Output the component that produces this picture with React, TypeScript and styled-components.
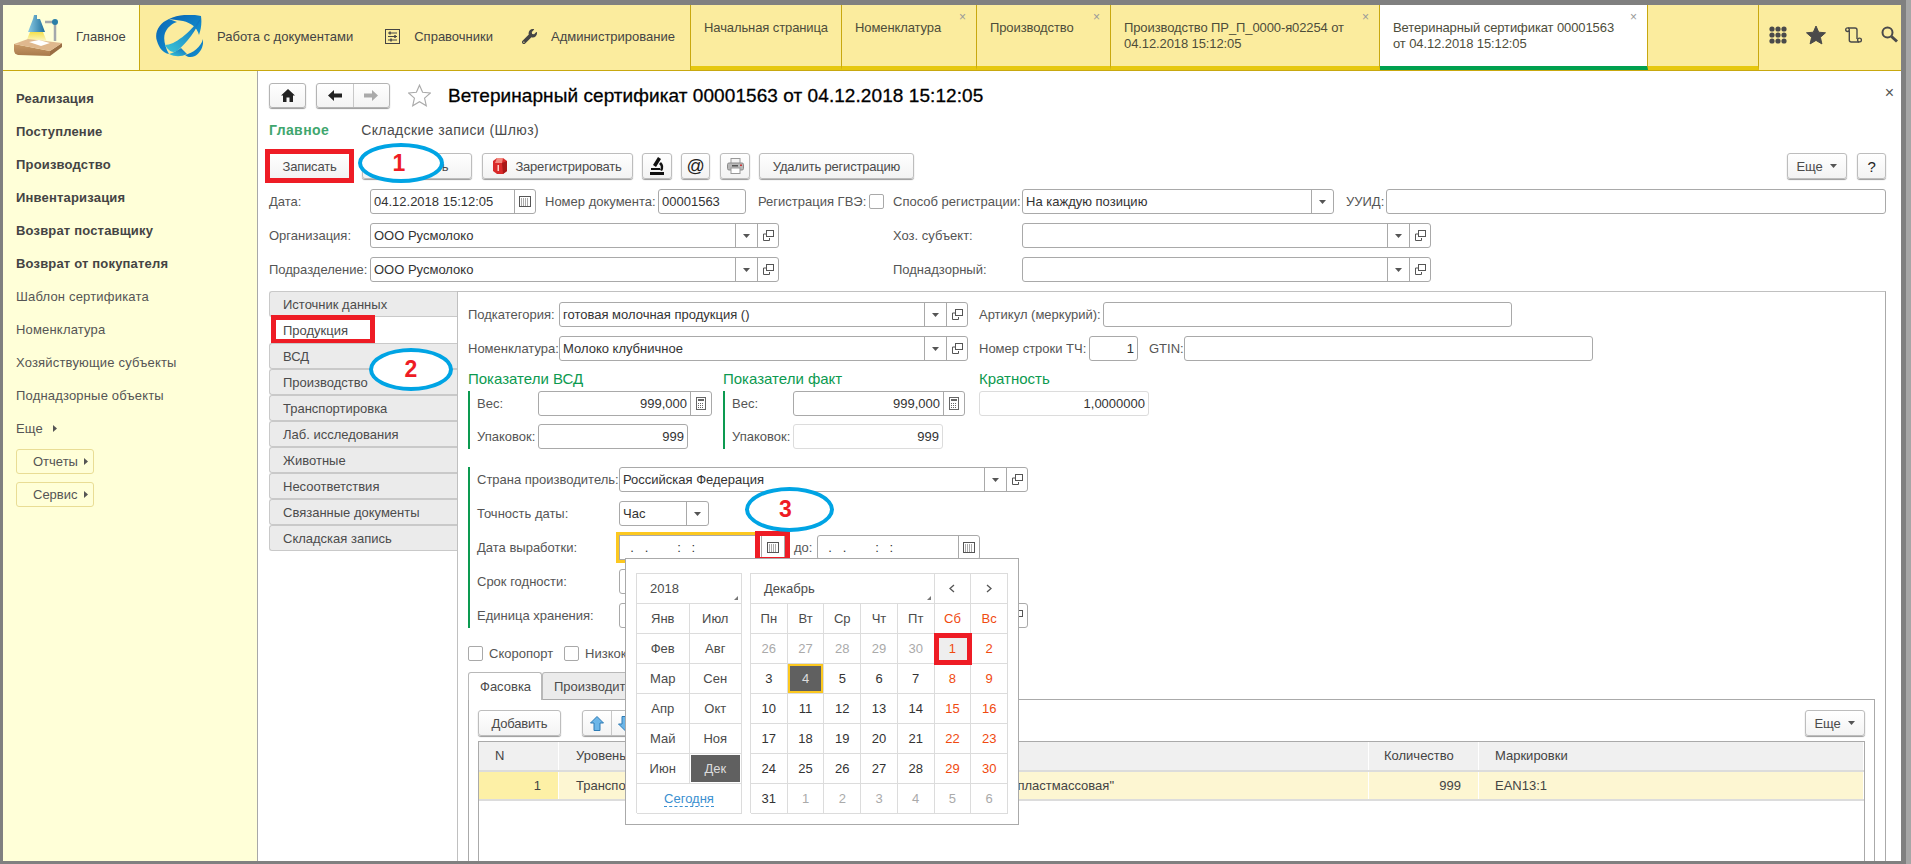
import React from "react";
import styled, { createGlobalStyle } from "styled-components";
import { FaWrench } from "react-icons/fa";

const GlobalStyle = createGlobalStyle`
  * { box-sizing: border-box; }
  html, body { margin: 0; padding: 0; background: #808080; overflow: hidden; }
  body { font-family: "Liberation Sans", Arial, sans-serif; font-size: 13px; color: #4b4b4b; }
`;

const Page = styled.div`
  position: relative;
  width: 1911px;
  height: 864px;
  padding: 5px 10px 3px 3px;
  background: linear-gradient(90deg, #808080 calc(100% - 5px), #a6a6a6 calc(100% - 5px));
  overflow: hidden;
`;

const Window = styled.div`
  display: flex;
  flex-direction: column;
  height: 100%;
  background: #fff;
`;

const Header = styled.header`
  display: flex;
  height: 66px;
  flex-shrink: 0;
  background: #fbec9e;
  border-bottom: 1px solid #c8a80f;
`;

const HomeSection = styled.div`
  display: flex;
  align-items: center;
  width: 137px;
  padding: 0 0 3px 10px;
  gap: 13px;
  background: #ffffd8;
  border-right: 1px solid #c8a80f;
  color: #444;
`;

const Nav = styled.nav`
  display: flex;
  align-items: center;
  width: 551px;
  padding: 0 0 3px 15px;
  border-right: 1px solid #c8a80f;
  color: #444;
`;

const NavItem = styled.div<{ $ml: number }>`
  display: flex;
  align-items: center;
  gap: 14px;
  margin-left: ${(p) => p.$ml}px;
  white-space: nowrap;
`;

const Tab = styled.div<{ $w: number; $active?: boolean }>`
  position: relative;
  width: ${(p) => p.$w}px;
  padding: 15px 0 0 13px;
  line-height: 16px;
  letter-spacing: -0.1px;
  white-space: nowrap;
  color: #4d4d3a;
  border-right: 1px solid #c8a80f;
  border-bottom: 4px solid ${(p) => (p.$active ? "#00a04f" : "#e6c80e")};
  background: ${(p) => (p.$active ? "#fff" : "transparent")};
`;

const TabClose = styled.span`
  position: absolute;
  right: 10px;
  top: 4px;
  font-size: 12px;
  color: #999;
`;

const TabFiller = styled.div`
  flex: 1;
  border-right: 1px solid #c8a80f;
  border-bottom: 4px solid #e6c80e;
`;

const QuickIcons = styled.div`
  display: flex;
  align-items: center;
  width: 142px;
  padding: 0 0 6px 10px;
  gap: 19px;
`;

const Body = styled.div`
  display: flex;
  flex: 1;
  min-height: 0;
`;

const Sidebar = styled.aside`
  width: 255px;
  flex-shrink: 0;
  padding: 11px 0 0 13px;
  background: #ffffd8;
  border-right: 1px solid #a8a8a8;
  letter-spacing: 0.18px;
`;

const SideLink = styled.div<{ $bold?: boolean }>`
  display: flex;
  align-items: center;
  gap: 10px;
  height: 33px;
  font-weight: ${(p) => (p.$bold ? 700 : 400)};
  color: ${(p) => (p.$bold ? "#444" : "#555")};
`;

const SideButton = styled.div<{ $mt: number }>`
  display: flex;
  align-items: center;
  gap: 6px;
  width: 78px;
  height: 25px;
  margin-top: ${(p) => p.$mt}px;
  padding-left: 16px;
  border: 1px solid #e9dd95;
  border-radius: 3px;
  color: #555;
  letter-spacing: 0;
`;

const Main = styled.main`
  display: flex;
  flex-direction: column;
  flex: 1;
  min-width: 0;
  padding: 12px 15px 0 11px;
`;

const TitleRow = styled.div`
  display: flex;
  align-items: center;
  height: 25px;
`;

const StarSlot = styled.span`
  display: flex;
  margin-left: 18px;
`;

const Title = styled.h1`
  margin: 0 0 0 17px;
  font-size: 19px;
  font-weight: 400;
  color: #000;
  letter-spacing: 0.07px;
  -webkit-text-stroke: 0.3px #000;
  white-space: nowrap;
`;

const CloseMark = styled.span`
  margin: -6px -8px 0 auto;
  font-size: 16px;
  color: #555;
`;

const SquareButton = styled.div<{ $w: number; $ml?: number }>`
  display: flex;
  align-items: center;
  justify-content: center;
  width: ${(p) => p.$w}px;
  height: 25px;
  margin-left: ${(p) => p.$ml ?? 0}px;
  border: 1px solid #b4b4b4;
  border-radius: 3px;
  background: linear-gradient(#fff, #f3f3f3);
  box-shadow: 0 1px 1px #999;
`;

const ArrowPart = styled.div<{ $divide?: boolean }>`
  display: flex;
  align-items: center;
  justify-content: center;
  flex: 1;
  height: 100%;
  border-left: ${(p) => (p.$divide ? "1px solid #c8c8c8" : "none")};
`;

const SectionTabs = styled.div`
  display: flex;
  align-items: center;
  gap: 32px;
  height: 20px;
  margin-top: 12px;
`;

const SectionTab = styled.span<{ $active?: boolean }>`
  font-size: 14px;
  letter-spacing: 0.4px;
  font-weight: ${(p) => (p.$active ? 700 : 400)};
  color: ${(p) => (p.$active ? "#3fa66e" : "#4b4b4b")};
`;

const Toolbar = styled.div`
  display: flex;
  align-items: center;
  height: 26px;
  margin-top: 13px;
`;

const Button = styled.div<{ $w: number; $ml?: number; $auto?: boolean; $marked?: boolean; $big?: number }>`
  display: flex;
  align-items: center;
  justify-content: center;
  gap: 8px;
  flex-shrink: 0;
  width: ${(p) => p.$w}px;
  height: 26px;
  margin-left: ${(p) => (p.$auto ? "auto" : `${p.$ml ?? 0}px`)};
  border: 1px solid #bdbdbd;
  border-radius: ${(p) => (p.$marked ? 0 : 3)}px;
  background: linear-gradient(#fff, #f3f3f3);
  box-shadow: 0 1px 1px #999;
  color: ${(p) => (p.$big ? "#222" : "#4b4b4b")};
  font-size: ${(p) => p.$big ?? 13}px;
  letter-spacing: -0.2px;
  white-space: nowrap;
  outline: ${(p) => (p.$marked ? "5px solid #ee1c25" : "none")};
  outline-offset: -1px;
`;

const FormRows = styled.div<{ $mt?: number }>`
  display: flex;
  flex-direction: column;
  gap: 9px;
  margin-top: ${(p) => p.$mt ?? 0}px;
`;

const Row = styled.div`
  display: flex;
  align-items: center;
`;

const Label = styled.label<{ $w: number; $ml?: number }>`
  flex-shrink: 0;
  width: ${(p) => p.$w}px;
  margin-left: ${(p) => p.$ml ?? 0}px;
  color: #555;
  white-space: nowrap;
`;

const Field = styled.div<{ $w?: number; $light?: boolean; $focus?: boolean; $grow?: boolean }>`
  position: relative;
  display: flex;
  flex-shrink: 0;
  flex-grow: ${(p) => (p.$grow ? 1 : 0)};
  width: ${(p) => (p.$w ? `${p.$w}px` : "auto")};
  height: 25px;
  border: 1px solid ${(p) => (p.$light ? "#dcdcdc" : "#a9a9a9")};
  border-radius: ${(p) => (p.$focus ? 0 : 3)}px;
  background: #fff;
  outline: ${(p) => (p.$focus ? "3px solid #fcc820" : "none")};
`;

const FieldText = styled.span<{ $right?: boolean }>`
  flex: 1;
  min-width: 0;
  padding: 0 3px;
  line-height: 23px;
  color: #333;
  text-align: ${(p) => (p.$right ? "right" : "left")};
  white-space: pre;
  overflow: hidden;
`;

const Addon = styled.div<{ $w: number }>`
  display: flex;
  align-items: center;
  justify-content: center;
  flex-shrink: 0;
  width: ${(p) => p.$w}px;
  border-left: 1px solid #a9a9a9;
`;

const RedFrame = styled.span`
  position: absolute;
  right: -6px;
  top: -5px;
  width: 35px;
  height: 31px;
  border: 5px solid #ee1c25;
`;

const CheckBox = styled.span`
  flex-shrink: 0;
  width: 15px;
  height: 15px;
  border: 1px solid #a9a9a9;
  border-radius: 2px;
  background: #fff;
`;

const Panel = styled.div`
  display: flex;
  flex: 1;
  min-height: 0;
  margin-top: 9px;
`;

const SideTabs = styled.div`
  width: 188px;
  flex-shrink: 0;
`;

const SideTab = styled.div<{ $active?: boolean }>`
  position: relative;
  height: 26px;
  padding-left: ${(p) => (p.$active ? 14 : 13)}px;
  line-height: ${(p) => (p.$active ? 28 : 25)}px;
  color: #4b4b4b;
  border-radius: 3px 0 0 3px;
  background: ${(p) => (p.$active ? "#fff" : "#ebebeb")};
  border: ${(p) => (p.$active ? "none" : "1px solid #c9c9c9")};
  border-right: none;
`;

const TabMark = styled.span`
  position: absolute;
  left: 2px;
  top: -2px;
  width: 104px;
  height: 29px;
  border: 5px solid #ee1c25;
`;

const Content = styled.div`
  display: flex;
  flex-direction: column;
  flex: 1;
  min-width: 0;
  padding: 10px 10px 0 10px;
  border-top: 1px solid #c0c0c0;
  border-left: 1px solid #c0c0c0;
  border-right: 1px solid #aaa;
`;

const Indicators = styled.div`
  display: flex;
  margin-top: 8px;
`;

const IndicatorColumn = styled.div<{ $w: number }>`
  width: ${(p) => p.$w}px;
  flex-shrink: 0;
`;

const GreenHeading = styled.div`
  height: 22px;
  font-size: 15px;
  line-height: 19px;
  color: #0c9a50;
`;

const Group = styled.div<{ $mt?: number; $gap: number }>`
  display: flex;
  flex-direction: column;
  gap: ${(p) => p.$gap}px;
  margin-top: ${(p) => p.$mt ?? 0}px;
  padding-left: 7px;
  border-left: 2px solid #0c9a50;
`;

const Checks = styled.div`
  display: flex;
  align-items: center;
  height: 15px;
  margin-top: 18px;
`;

const CheckLabel = styled.span<{ $mr: number }>`
  margin: 0 ${(p) => p.$mr}px 0 6px;
  color: #555;
  white-space: nowrap;
`;

const SubTabs = styled.div`
  display: flex;
  height: 28px;
  margin-top: 11px;
  flex-shrink: 0;
`;

const SubTab = styled.div<{ $w: number; $active?: boolean }>`
  width: ${(p) => p.$w}px;
  padding-left: 11px;
  line-height: 27px;
  border: 1px solid #b8b8b8;
  border-bottom: ${(p) => (p.$active ? "none" : "1px solid #aaa")};
  border-radius: 3px 3px 0 0;
  background: ${(p) => (p.$active ? "#fff" : "#ebebeb")};
  color: #4b4b4b;
  white-space: nowrap;
`;

const SubTabLine = styled.div`
  flex: 1;
  border-bottom: 1px solid #aaa;
`;

const SubPanel = styled.div`
  display: flex;
  flex-direction: column;
  flex: 1;
  min-height: 0;
  padding: 10px 9px 0;
  border-left: 1px solid #aaa;
  border-right: 1px solid #aaa;
`;

const TableBar = styled.div`
  display: flex;
  align-items: center;
  height: 26px;
`;

const Stepper = styled.div`
  display: flex;
  width: 58px;
  height: 26px;
  margin-left: 21px;
  border: 1px solid #bdbdbd;
  border-radius: 3px;
  background: linear-gradient(#fff, #f3f3f3);
  box-shadow: 0 1px 1px #999;
`;

const Table = styled.div`
  flex: 1;
  margin-top: 5px;
  border: 1px solid #aaa;
  border-bottom: none;
`;

const TableRow = styled.div<{ $head?: boolean }>`
  display: grid;
  grid-template-columns: 80px 300px 510px 110px 1fr;
  height: ${(p) => (p.$head ? 30 : 29)}px;
  border-bottom: 2px solid #dcdcdc;
  background: ${(p) => (p.$head ? "#f0f0f0" : "#fdf6d2")};
`;

const Cell = styled.div<{ $align?: string; $pl?: number; $pr?: number; $key?: boolean }>`
  padding: 0 ${(p) => p.$pr ?? 0}px 0 ${(p) => p.$pl ?? 17}px;
  line-height: 27px;
  text-align: ${(p) => p.$align ?? "left"};
  white-space: nowrap;
  overflow: hidden;
  color: #444;
  border-right: 1px solid #fff;
  background: ${(p) => (p.$key ? "#fdf0a6" : "transparent")};
`;

const Popup = styled.div`
  position: absolute;
  left: 625px;
  top: 558px;
  display: flex;
  gap: 8px;
  width: 394px;
  height: 267px;
  padding: 14px 10px;
  background: #fff;
  border: 1px solid #aaa;
`;

const CalBox = styled.div<{ $w: number; $cols: string }>`
  display: grid;
  grid-template-columns: ${(p) => p.$cols};
  grid-auto-rows: 30px;
  width: ${(p) => p.$w}px;
  height: 240px;
  border: 1px solid #dcdcdc;
  border-width: 1px 0 0 1px;
`;

const CalCell = styled.div<{ $span?: number; $tone?: string; $flat?: boolean }>`
  position: relative;
  display: flex;
  align-items: center;
  justify-content: center;
  grid-column: span ${(p) => p.$span ?? 1};
  color: ${(p) => p.$tone ?? "#4b4b4b"};
  border-right: 1px solid #dcdcdc;
  border-bottom: ${(p) => (p.$flat ? "none" : "1px solid #dcdcdc")};
`;

const HeadCell = styled(CalCell)`
  justify-content: flex-start;
  padding-left: 13px;
`;

const Corner = styled.span`
  position: absolute;
  right: 3px;
  bottom: 3px;
  width: 0;
  height: 0;
  border-left: 4px solid transparent;
  border-bottom: 4px solid #777;
`;

const SelectedMonth = styled(CalCell)`
  color: #ddd;
  background: #606060;
  box-shadow: inset 0 0 0 1px #fff;
`;

const TodayDay = styled(CalCell)`
  color: #ddd;
  background: #606060;
  box-shadow: inset 0 0 0 2px #fcc820;
`;

const MarkedDay = styled(CalCell)`
  background: #eee;
  color: #f04a10;
  outline: 5px solid #ee1c25;
  outline-offset: -4px;
  z-index: 1;
`;

const TodayLink = styled.span`
  color: #3a8fd0;
  border-bottom: 1px dashed #3a8fd0;
  line-height: 15px;
`;

const Ellipse = styled.div<{ $x: number; $y: number; $w: number; $h: number; $pr?: number }>`
  position: absolute;
  left: ${(p) => p.$x}px;
  top: ${(p) => p.$y}px;
  display: flex;
  align-items: center;
  justify-content: center;
  width: ${(p) => p.$w}px;
  height: ${(p) => p.$h}px;
  padding-right: ${(p) => p.$pr ?? 0}px;
  border: 4px solid #00a4e4;
  border-radius: 50%;
  background: #fff;
  color: #ee1c25;
  font-size: 23px;
  font-weight: 700;
`;

const DropArrow = () => (
  <svg width="7" height="4" viewBox="0 0 7 4">
    <path d="M0 0h7L3.5 4z" fill="#555" />
  </svg>
);

const SideArrow = () => (
  <svg width="4" height="7" viewBox="0 0 4 7">
    <path d="M0 0v7l4-3.5z" fill="#555" />
  </svg>
);

const OpenIcon = () => (
  <svg width="11" height="11" viewBox="0 0 11 11" fill="none" stroke="#555">
    <rect x="3.5" y="0.5" width="7" height="6" fill="#fff" />
    <path d="M3 4H.5v6.5h6V8" />
  </svg>
);

const CalendarIcon = () => (
  <svg width="12" height="11" viewBox="0 0 12 11" fill="none" stroke="#555">
    <rect x="0.5" y="0.5" width="11" height="10" />
    <path d="M2 3h8M2 5h8M2 7h8M2 9h8" strokeDasharray="1 1" />
  </svg>
);

const CalcIcon = () => (
  <svg width="10" height="13" viewBox="0 0 10 13" fill="none" stroke="#666">
    <rect x="0.5" y="0.5" width="9" height="12" />
    <path d="M2 3h6" strokeWidth="2" />
    <path d="M2 6.5h6M2 8.5h6M2 10.5h6" strokeDasharray="1 1" />
  </svg>
);

const LampIcon = () => (
  <svg width="50" height="44" viewBox="0 0 50 44">
    <defs>
      <linearGradient id="shade" x1="0" y1="0" x2="1" y2="0">
        <stop offset="0" stopColor="#8ccbe4" />
        <stop offset="1" stopColor="#1f6f9c" />
      </linearGradient>
      <linearGradient id="beam" x1="0" y1="0" x2="0" y2="1">
        <stop offset="0" stopColor="#f5e04c" />
        <stop offset="1" stopColor="#fdf9d0" />
      </linearGradient>
      <linearGradient id="wood" x1="0" y1="0" x2="0" y2="1">
        <stop offset="0" stopColor="#c99a66" />
        <stop offset="1" stopColor="#a87a4c" />
      </linearGradient>
    </defs>
    <path d="M17 18h13l4 10H13z" fill="url(#beam)" />
    <path d="M32 8h10v19" fill="none" stroke="#a4a8ac" strokeWidth="2.5" />
    <circle cx="42" cy="8" r="3" fill="#2a7ea8" />
    <path d="M21 1h3v4h3l5 13H15l5-13z" fill="url(#shade)" />
    <path d="M1 30l36 7v5l-32-1q-4-1-4-5z" fill="url(#wood)" />
    <path d="M37 37l12-8v4l-12 9z" fill="#9a6e44" />
    <path d="M1 30l14-5 34 4-12 8z" fill="#dfb88e" />
    <path d="M16 28l10-2 11 3-9 3z" fill="#fff" />
  </svg>
);

const LogoIcon = () => (
  <svg width="48" height="43" viewBox="0 0 48 43">
    <defs>
      <linearGradient id="orbA" x1="0" y1="0" x2="1" y2="1">
        <stop offset="0" stopColor="#0a64b4" />
        <stop offset="1" stopColor="#1294d2" />
      </linearGradient>
      <linearGradient id="orbB" x1="1" y1="0" x2="0" y2="1">
        <stop offset="0" stopColor="#0a6ec0" />
        <stop offset="1" stopColor="#3cc6d6" />
      </linearGradient>
    </defs>
    <path d="M14 4C4 8-1 18 2 26c2 7 6 12 12 13-4-7-6-15-4-21 2-5 6-9 12-11z" fill="url(#orbA)" />
    <path d="M14 4C24-1 38-1 46 1c1 7 0 13-2 19-2-8-8-12-16-14-4-1-10-1-14-2z" fill="url(#orbA)" />
    <path d="M46 3C42 14 32 28 22 36c-4 2-8 1-12-6 10 0 24-12 36-27z" fill="url(#orbB)" />
    <path d="M30 40c8-2 16-8 18-16 1 6-2 14-8 17-4 2-8 1-10-1z" fill="url(#orbA)" />
    <path d="M14 39c6 3 12 3 18 0l-6-6c-4 3-8 5-12 6z" fill="url(#orbB)" />
  </svg>
);

const SettingsIcon = () => (
  <svg width="15" height="15" viewBox="0 0 15 15" fill="none" stroke="#444">
    <rect x="0.5" y="0.5" width="14" height="14" />
    <path d="M3 4h9M3 7.5h9M3 11h9" />
    <path d="M5 2.5v3M10 6v3M6 9.5v3" strokeWidth="1.5" />
  </svg>
);

const GridIcon = () => (
  <svg width="18" height="18" viewBox="0 0 18 18" fill="#4a4a4a">
    {[3, 9, 15].map((y) =>
      [3, 9, 15].map((x) => <circle key={`${x}${y}`} cx={x} cy={y} r="2.6" />)
    )}
  </svg>
);

const StarIcon = ({ filled, size }: { filled?: boolean; size: number }) => (
  <svg width={size} height={size} viewBox="0 0 20 20">
    <path
      d="M10 1l2.700 6.200 6.800.6-5.100 4.500 1.500 6.600L10 15.400l-5.900 3.500 1.500-6.600L.5 7.800l6.800-.6z"
      fill={filled ? "#4a4a4a" : "none"}
      stroke={filled ? "#4a4a4a" : "#aaa"}
    />
  </svg>
);

const ScrollIcon = () => (
  <svg width="17" height="16" viewBox="0 0 17 16" fill="none" stroke="#4a4a4a" strokeWidth="1.4">
    <circle cx="2.500" cy="2.700" r="1.800" />
    <path d="M3 1h7q2 0 2 2v9" />
    <path d="M4.300 3.500V13q0 2 2 2h8" />
    <circle cx="14.500" cy="13" r="1.900" />
  </svg>
);

const SearchIcon = () => (
  <svg width="17" height="17" viewBox="0 0 17 17" fill="none" stroke="#4a4a4a">
    <circle cx="6.500" cy="6.500" r="5" strokeWidth="2" />
    <path d="M10.500 10.500L16 15.500" strokeWidth="3" />
  </svg>
);

const HomeIcon = () => (
  <svg width="14" height="13" viewBox="0 0 14 13" fill="#222">
    <path d="M7 0L0 6.500h2V13h3.500V8.500h3V13H12V6.500h2z" />
  </svg>
);

const ArrowIcon = ({ dir, color }: { dir: "left" | "right"; color: string }) => (
  <svg width="14" height="11" viewBox="0 0 14 11" fill={color}>
    <path d={dir === "left" ? "M0 5.500L6 0v3.500h8v4H6V11z" : "M14 5.500L8 0v3.500H0v4h8V11z"} />
  </svg>
);

const RubyIcon = () => (
  <svg width="14" height="16" viewBox="0 0 14 16">
    <path d="M4 0h6l4 3v10l-4 3H4l-4-3V3z" fill="#d92a2a" />
    <path d="M4 0h6l-1 5H2z" fill="#f28a80" />
    <path d="M9 5l5-2v10l-4 3z" fill="#a81818" />
    <path d="M4.500 7h1.500v6H4.500z" fill="#ffd0c8" />
  </svg>
);

const MicroscopeIcon = () => (
  <svg width="16" height="19" viewBox="0 0 16 19" fill="#111">
    <path d="M9 0l3 2-5 8-3-2z" />
    <path d="M12 5q4 4 1 9l-2-1q2-4-1-6z" />
    <path d="M2 11h9v2H2z" />
    <path d="M1 15h14v3H1z" />
  </svg>
);

const PrinterIcon = () => (
  <svg width="17" height="16" viewBox="0 0 17 16">
    <rect x="4" y="0.500" width="9" height="5" fill="#f4f4f4" stroke="#999" />
    <rect x="0.500" y="5" width="16" height="7" rx="1.500" fill="#b8b8b8" stroke="#8b8b8b" />
    <rect x="4" y="10" width="9" height="5.500" fill="#fff" stroke="#999" />
    <rect x="13" y="6.500" width="2" height="1.500" fill="#c33" />
    <rect x="5" y="7" width="6" height="1.500" fill="#555" />
  </svg>
);

const BlueArrow = ({ down }: { down?: boolean }) => (
  <svg width="14" height="15" viewBox="0 0 14 15" style={down ? { transform: "rotate(180deg)" } : undefined}>
    <path d="M7 .5L13.500 7H10v7.500H4V7H.5z" fill="#6cb6e8" stroke="#2d7bb5" />
  </svg>
);

const Chevron = ({ dir }: { dir: "left" | "right" }) => (
  <svg width="6" height="9" viewBox="0 0 6 9" fill="none" stroke="#555" strokeWidth="1.300">
    <path d={dir === "left" ? "M5 1L1 4.500 5 8" : "M1 1l4 3.500L1 8"} />
  </svg>
);

const Dropdown = () => (
  <Addon $w={22}>
    <DropArrow />
  </Addon>
);

const Open = () => (
  <Addon $w={21}>
    <OpenIcon />
  </Addon>
);

const DATE_MASK = "  .   .        :   :";

const sideLinks = [
  { text: "Реализация", bold: true },
  { text: "Поступление", bold: true },
  { text: "Производство", bold: true },
  { text: "Инвентаризация", bold: true },
  { text: "Возврат поставщику", bold: true },
  { text: "Возврат от покупателя", bold: true },
  { text: "Шаблон сертификата" },
  { text: "Номенклатура" },
  { text: "Хозяйствующие субъекты" },
  { text: "Поднадзорные объекты" },
];

const sideTabs = [
  "Источник данных",
  "Продукция",
  "ВСД",
  "Производство",
  "Транспортировка",
  "Лаб. исследования",
  "Животные",
  "Несоответствия",
  "Связанные документы",
  "Складская запись",
];

const months = [
  ["Янв", "Июл"],
  ["Фев", "Авг"],
  ["Мар", "Сен"],
  ["Апр", "Окт"],
  ["Май", "Ноя"],
  ["Июн", "Дек"],
];

const weekDays = ["Пн", "Вт", "Ср", "Чт", "Пт", "Сб", "Вс"];

const days = [
  26, 27, 28, 29, 30, 1, 2, 3, 4, 5, 6, 7, 8, 9, 10, 11, 12, 13, 14, 15, 16, 17, 18, 19, 20, 21, 22, 23, 24, 25, 26,
  27, 28, 29, 30, 31, 1, 2, 3, 4, 5, 6,
];

const Calendar = () => (
  <Popup>
    <CalBox $w={106} $cols="1fr 1fr">
      <HeadCell $span={2}>
        2018
        <Corner />
      </HeadCell>
      {months.map((pair) =>
        pair.map((m) =>
          m === "Дек" ? (
            <SelectedMonth key={m}>{m}</SelectedMonth>
          ) : (
            <CalCell key={m}>{m}</CalCell>
          )
        )
      )}
      <CalCell $span={2}>
        <TodayLink>Сегодня</TodayLink>
      </CalCell>
    </CalBox>
    <CalBox $w={258} $cols="repeat(7, 1fr)">
      <HeadCell $span={5}>
        Декабрь
        <Corner />
      </HeadCell>
      <CalCell>
        <Chevron dir="left" />
      </CalCell>
      <CalCell>
        <Chevron dir="right" />
      </CalCell>
      {weekDays.map((d, i) => (
        <CalCell key={d} $tone={i > 4 ? "#f04a10" : undefined}>
          {d}
        </CalCell>
      ))}
      {days.map((d, i) => {
        const muted = i < 5 || i > 35;
        const weekend = i % 7 > 4;
        if (i === 5) return <MarkedDay key={i}>{d}</MarkedDay>;
        if (i === 8) return <TodayDay key={i}>{d}</TodayDay>;
        return (
          <CalCell key={i} $tone={muted ? "#aaa" : weekend ? "#f04a10" : "#333"}>
            {d}
          </CalCell>
        );
      })}
    </CalBox>
  </Popup>
);

export default function App() {
  return (
    <Page>
      <GlobalStyle />
      <Window>
        <Header>
          <HomeSection>
            <LampIcon />
            Главное
          </HomeSection>
          <Nav>
            <LogoIcon />
            <NavItem $ml={14}>Работа с документами</NavItem>
            <NavItem $ml={32}>
              <SettingsIcon />
              Справочники
            </NavItem>
            <NavItem $ml={29}>
              <FaWrench size={15} color="#444" />
              Администрирование
            </NavItem>
          </Nav>
          <Tab $w={151}>Начальная страница</Tab>
          <Tab $w={135}>
            Номенклатура
            <TabClose>×</TabClose>
          </Tab>
          <Tab $w={134}>
            Производство
            <TabClose>×</TabClose>
          </Tab>
          <Tab $w={269}>
            Производство ПР_П_0000-я02254 от
            <br />
            04.12.2018 15:12:05
            <TabClose>×</TabClose>
          </Tab>
          <Tab $w={268} $active>
            Ветеринарный сертификат 00001563
            <br />
            от 04.12.2018 15:12:05
            <TabClose>×</TabClose>
          </Tab>
          <TabFiller />
          <QuickIcons>
            <GridIcon />
            <StarIcon filled size={20} />
            <ScrollIcon />
            <SearchIcon />
          </QuickIcons>
        </Header>
        <Body>
          <Sidebar>
            {sideLinks.map((l) => (
              <SideLink key={l.text} $bold={l.bold}>
                {l.text}
              </SideLink>
            ))}
            <SideLink>
              Еще
              <SideArrow />
            </SideLink>
            <SideButton $mt={4}>
              Отчеты
              <SideArrow />
            </SideButton>
            <SideButton $mt={8}>
              Сервис
              <SideArrow />
            </SideButton>
          </Sidebar>
          <Main>
            <TitleRow>
              <SquareButton $w={37}>
                <HomeIcon />
              </SquareButton>
              <SquareButton $w={74} $ml={10}>
                <ArrowPart>
                  <ArrowIcon dir="left" color="#222" />
                </ArrowPart>
                <ArrowPart $divide>
                  <ArrowIcon dir="right" color="#aaa" />
                </ArrowPart>
              </SquareButton>
              <StarSlot>
                <StarIcon size={23} />
              </StarSlot>
              <Title>Ветеринарный сертификат 00001563 от 04.12.2018 15:12:05</Title>
              <CloseMark>×</CloseMark>
            </TitleRow>
            <SectionTabs>
              <SectionTab $active>Главное</SectionTab>
              <SectionTab>Складские записи (Шлюз)</SectionTab>
            </SectionTabs>
            <Toolbar>
              <Button $w={81} $marked>
                Записать
              </Button>
              <Button $w={110} $ml={12}>
                Подписать
              </Button>
              <Button $w={151} $ml={10}>
                <RubyIcon />
                Зарегистрировать
              </Button>
              <Button $w={30} $ml={9}>
                <MicroscopeIcon />
              </Button>
              <Button $w={29} $ml={9} $big={18}>
                @
              </Button>
              <Button $w={30} $ml={10}>
                <PrinterIcon />
              </Button>
              <Button $w={155} $ml={9}>
                Удалить регистрацию
              </Button>
              <Button $w={60} $auto>
                Еще
                <DropArrow />
              </Button>
              <Button $w={29} $ml={10} $big={15}>
                ?
              </Button>
            </Toolbar>
            <FormRows $mt={10}>
              <Row>
                <Label $w={101}>Дата:</Label>
                <Field $w={166}>
                  <FieldText>04.12.2018 15:12:05</FieldText>
                  <Addon $w={21}>
                    <CalendarIcon />
                  </Addon>
                </Field>
                <Label $w={113} $ml={9}>
                  Номер документа:
                </Label>
                <Field $w={88}>
                  <FieldText>00001563</FieldText>
                </Field>
                <Label $w={111} $ml={12}>
                  Регистрация ГВЭ:
                </Label>
                <CheckBox />
                <Label $w={129} $ml={9}>
                  Способ регистрации:
                </Label>
                <Field $w={312}>
                  <FieldText>На каждую позицию</FieldText>
                  <Dropdown />
                </Field>
                <Label $w={40} $ml={12}>
                  УУИД:
                </Label>
                <Field $grow />
              </Row>
              <Row>
                <Label $w={101}>Организация:</Label>
                <Field $w={409}>
                  <FieldText>ООО Русмолоко</FieldText>
                  <Dropdown />
                  <Open />
                </Field>
                <Label $w={129} $ml={114}>
                  Хоз. субъект:
                </Label>
                <Field $w={409}>
                  <FieldText />
                  <Dropdown />
                  <Open />
                </Field>
              </Row>
              <Row>
                <Label $w={101}>Подразделение:</Label>
                <Field $w={409}>
                  <FieldText>ООО Русмолоко</FieldText>
                  <Dropdown />
                  <Open />
                </Field>
                <Label $w={129} $ml={114}>
                  Поднадзорный:
                </Label>
                <Field $w={409}>
                  <FieldText />
                  <Dropdown />
                  <Open />
                </Field>
              </Row>
            </FormRows>
            <Panel>
              <SideTabs>
                {sideTabs.map((t) => (
                  <SideTab key={t} $active={t === "Продукция"}>
                    {t}
                    {t === "Продукция" && <TabMark />}
                  </SideTab>
                ))}
              </SideTabs>
              <Content>
                <FormRows>
                  <Row>
                    <Label $w={91}>Подкатегория:</Label>
                    <Field $w={409}>
                      <FieldText>готовая молочная продукция ()</FieldText>
                      <Dropdown />
                      <Open />
                    </Field>
                    <Label $w={124} $ml={11}>
                      Артикул (меркурий):
                    </Label>
                    <Field $w={409} />
                  </Row>
                  <Row>
                    <Label $w={91}>Номенклатура:</Label>
                    <Field $w={409}>
                      <FieldText>Молоко клубничное</FieldText>
                      <Dropdown />
                      <Open />
                    </Field>
                    <Label $w={110} $ml={11}>
                      Номер строки ТЧ:
                    </Label>
                    <Field $w={49}>
                      <FieldText $right>1</FieldText>
                    </Field>
                    <Label $w={35} $ml={11}>
                      GTIN:
                    </Label>
                    <Field $w={409} />
                  </Row>
                </FormRows>
                <Indicators>
                  <IndicatorColumn $w={255}>
                    <GreenHeading>Показатели ВСД</GreenHeading>
                    <Group $gap={8}>
                      <Row>
                        <Label $w={61}>Вес:</Label>
                        <Field $w={174}>
                          <FieldText $right>999,000</FieldText>
                          <Addon $w={21}>
                            <CalcIcon />
                          </Addon>
                        </Field>
                      </Row>
                      <Row>
                        <Label $w={61}>Упаковок:</Label>
                        <Field $w={150}>
                          <FieldText $right>999</FieldText>
                        </Field>
                      </Row>
                    </Group>
                  </IndicatorColumn>
                  <IndicatorColumn $w={256}>
                    <GreenHeading>Показатели факт</GreenHeading>
                    <Group $gap={8}>
                      <Row>
                        <Label $w={61}>Вес:</Label>
                        <Field $w={172}>
                          <FieldText $right>999,000</FieldText>
                          <Addon $w={21}>
                            <CalcIcon />
                          </Addon>
                        </Field>
                      </Row>
                      <Row>
                        <Label $w={61}>Упаковок:</Label>
                        <Field $w={150} $light>
                          <FieldText $right>999</FieldText>
                        </Field>
                      </Row>
                    </Group>
                  </IndicatorColumn>
                  <div>
                    <GreenHeading>Кратность</GreenHeading>
                    <Field $w={170} $light>
                      <FieldText $right>1,0000000</FieldText>
                    </Field>
                  </div>
                </Indicators>
                <Group $mt={18} $gap={9}>
                  <Row>
                    <Label $w={142}>Страна производитель:</Label>
                    <Field $w={409}>
                      <FieldText>Российская Федерация</FieldText>
                      <Dropdown />
                      <Open />
                    </Field>
                  </Row>
                  <Row>
                    <Label $w={142}>Точность даты:</Label>
                    <Field $w={90}>
                      <FieldText>Час</FieldText>
                      <Dropdown />
                    </Field>
                  </Row>
                  <Row>
                    <Label $w={142}>Дата выработки:</Label>
                    <Field $w={166} $focus>
                      <FieldText>{DATE_MASK}</FieldText>
                      <Addon $w={23}>
                        <CalendarIcon />
                      </Addon>
                      <RedFrame />
                    </Field>
                    <Label $w={23} $ml={9}>
                      до:
                    </Label>
                    <Field $w={163}>
                      <FieldText>{DATE_MASK}</FieldText>
                      <Addon $w={21}>
                        <CalendarIcon />
                      </Addon>
                    </Field>
                  </Row>
                  <Row>
                    <Label $w={142}>Срок годности:</Label>
                    <Field $w={166}>
                      <FieldText />
                    </Field>
                  </Row>
                  <Row>
                    <Label $w={142}>Единица хранения:</Label>
                    <Field $w={409}>
                      <FieldText />
                      <Dropdown />
                      <Open />
                    </Field>
                  </Row>
                </Group>
                <Checks>
                  <CheckBox />
                  <CheckLabel $mr={11}>Скоропорт</CheckLabel>
                  <CheckBox />
                  <CheckLabel $mr={11}>Низкокалорийный</CheckLabel>
                </Checks>
                <SubTabs>
                  <SubTab $w={74} $active>
                    Фасовка
                  </SubTab>
                  <SubTab $w={120}>Производитель</SubTab>
                  <SubTabLine />
                </SubTabs>
                <SubPanel>
                  <TableBar>
                    <Button $w={83}>Добавить</Button>
                    <Stepper>
                      <ArrowPart>
                        <BlueArrow />
                      </ArrowPart>
                      <ArrowPart $divide>
                        <BlueArrow down />
                      </ArrowPart>
                    </Stepper>
                    <Button $w={60} $auto>
                      Еще
                      <DropArrow />
                    </Button>
                  </TableBar>
                  <Table>
                    <TableRow $head>
                      <Cell $pl={16}>N</Cell>
                      <Cell>Уровень</Cell>
                      <Cell />
                      <Cell $pl={15}>Количество</Cell>
                      <Cell $pl={16}>Маркировки</Cell>
                    </TableRow>
                    <TableRow>
                      <Cell $key $align="right" $pr={17}>
                        1
                      </Cell>
                      <Cell>Транспортная упаковка</Cell>
                      <Cell $align="right" $pr={254}>
                        "Коробка пластмассовая"
                      </Cell>
                      <Cell $align="right" $pr={17}>
                        999
                      </Cell>
                      <Cell $pl={16}>EAN13:1</Cell>
                    </TableRow>
                  </Table>
                </SubPanel>
              </Content>
            </Panel>
          </Main>
        </Body>
      </Window>
      <Calendar />
      <Ellipse $x={358} $y={143} $w={86} $h={40} $pr={4}>
        1
      </Ellipse>
      <Ellipse $x={369} $y={348} $w={84} $h={43}>
        2
      </Ellipse>
      <Ellipse $x={745} $y={487} $w={89} $h={45} $pr={8}>
        3
      </Ellipse>
    </Page>
  );
}
